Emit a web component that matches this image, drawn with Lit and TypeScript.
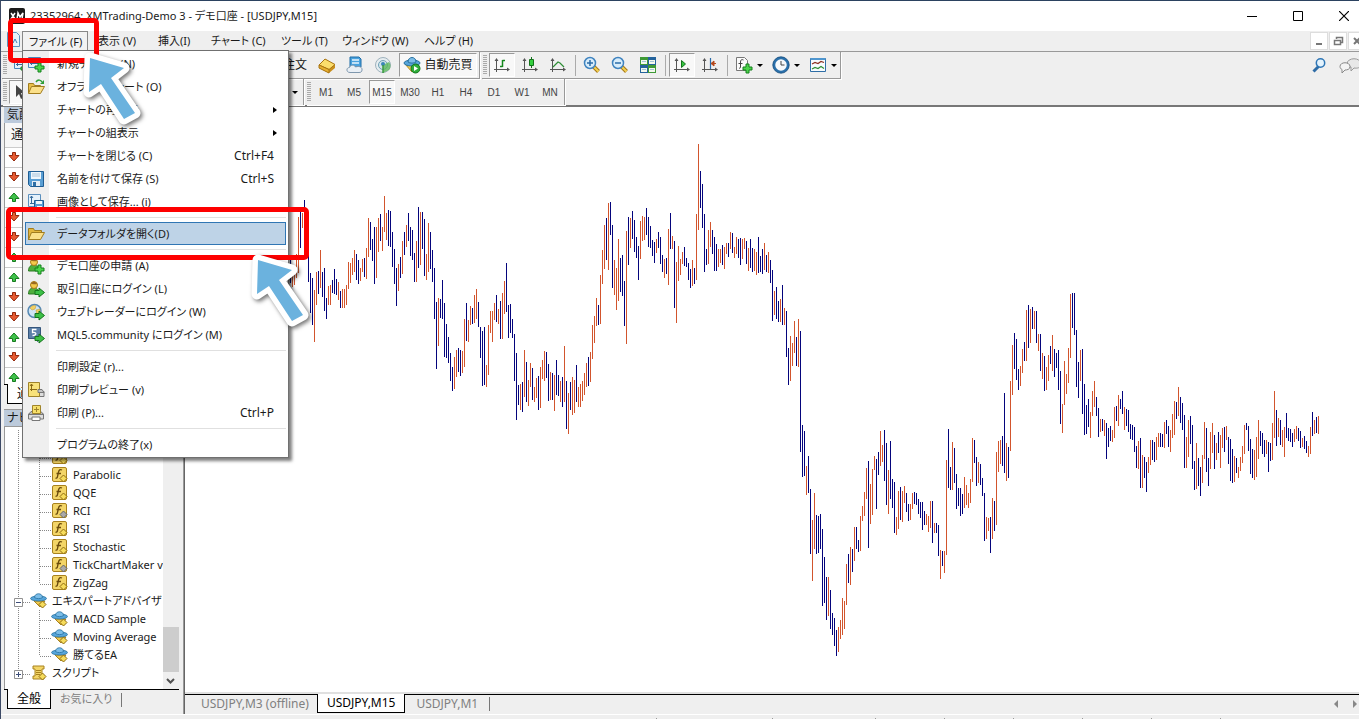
import { LitElement, html, svg, css, nothing, TemplateResult } from "lit";
import { customElement, property } from "lit/decorators.js";
import { classMap } from "lit/directives/class-map.js";

/* Price bars, two pixels apart. r = rising, b = falling, then high and low. */
const BARS = `b259-283 r275-287 r273-285 r254-278 r217-273 b212-248 r213-228 b200-245 b235-259 b255-282
b273-313 b278-325 r290-342 r272-305 b271-294 r250-288 b272-297 b268-311 b298-319 r286-305
r285-305 b280-293 b269-294 b279-295 r282-300 b291-308 r289-308 r289-308 r285-305 r262-289
r263-283 r258-275 r250-272 b254-280 b260-284 r268-281 r259-272 b258-277 r248-279 r218-257
b222-250 b239-261 b227-284 r227-278 r218-252 b214-241 r227-251 r196-232 r213-240 b210-246
b211-247 b232-267 b249-284 b268-306 r264-291 b257-278 r241-274 b232-255 r225-247 b213-241
b227-256 b230-260 b253-282 r241-282 b207-268 r212-265 b212-249 b219-276 r254-280 r223-272
b232-269 b250-282 b268-319 b302-369 r298-346 b299-318 b280-319 b303-357 b324-358 b337-363
b353-381 b367-391 r357-389 r350-377 b348-372 b350-376 r351-373 r319-367 b303-341 r320-342
r306-325 b308-324 r295-323 r289-319 b302-327 b327-358 b331-386 b327-385 r365-387 r325-375
r311-333 r311-342 r303-320 b295-322 r309-324 b301-339 r293-339 r281-314 b263-312 b305-338
b304-333 b319-338 b334-381 b353-420 b385-405 r384-410 b382-412 r350-397 b362-402 r380-406
r363-387 b368-400 r387-402 r378-398 b376-410 r367-408 r360-379 r351-381 b352-378 b364-401
r372-400 b373-400 r375-411 b360-395 b375-396 r381-402 b377-407 r346-402 b381-429 r393-434
b382-410 r377-415 r380-413 b365-402 r387-407 r384-407 r381-401 r373-395 r363-387 b357-386
r352-382 r325-359 r316-343 r298-326 b305-325 r275-324 r250-284 r225-269 b218-260 r203-270
b202-235 b225-288 r260-295 r268-310 r239-301 b258-292 b255-296 b281-326 r231-344 b217-265
r218-248 b211-239 b220-252 b237-258 b246-280 r221-259 r216-241 r217-240 b208-235 b217-247
b226-248 b240-256 b242-263 r239-253 b232-248 b237-264 b255-272 r259-278 b258-274 r229-285
b213-249 r236-249 b241-308 r262-323 r246-281 r259-275 r252-264 b247-266 b258-267 b263-280
b269-288 r260-286 b268-284 r214-280 r144-230 b171-208 b184-228 b214-272 b249-265 r230-264
r222-247 b230-254 b237-271 b244-271 r249-267 r249-263 b245-265 r247-269 r243-254 b243-257
r232-249 b233-253 r247-258 r237-254 b239-258 b238-265 r239-259 r238-249 b241-264 r248-271
b239-268 b248-272 r249-271 r252-275 b237-273 b256-272 b249-274 r243-270 b255-272 r252-273
b260-283 b270-321 r291-315 b287-319 b301-322 r299-322 b285-325 r308-325 b311-357 b348-385
r336-381 r343-366 r321-353 b337-366 r319-367 b331-452 b425-477 b431-476 r466-495 b456-493
b489-554 r520-581 r493-549 b515-554 b516-553 b514-549 b529-606 b557-603 b577-620 r577-616
b590-629 b613-635 b618-646 b630-656 r627-652 r620-639 r598-635 r601-629 r564-605 b554-583
r547-585 b549-572 r527-561 b527-549 b540-552 r516-551 r506-521 r492-516 r468-499 b461-548
r484-524 r469-515 r456-470 b459-509 b452-475 r431-466 r445-462 b430-481 b443-505 r470-514
b441-499 b479-508 b482-533 r517-535 r491-529 b487-520 r491-522 r486-503 b493-512 b504-521
r504-520 r493-509 b492-504 b493-505 b499-514 b502-518 b502-530 b511-525 r514-525 r516-532
r501-528 b501-543 r523-533 b523-533 b525-556 r550-579 b551-566 r551-573 r460-555 b429-488
b467-490 r442-490 b448-483 b474-509 b488-506 b488-516 b494-514 r477-508 r485-505 r493-508
r479-503 r438-482 b440-463 b457-486 r462-483 b464-485 b478-496 b493-541 r517-539 r518-531
b517-553 r498-539 b501-531 r452-525 r441-472 r440-464 b436-466 b393-473 r443-481 b447-478
r381-451 r345-395 b333-369 b339-380 b369-390 r366-386 r349-373 b342-361 r310-361 b305-348
r309-343 b307-329 r311-329 b311-343 r334-351 b334-371 r353-379 b356-391 r367-390 r355-381
b346-364 r335-371 b349-377 b353-368 b350-390 b371-424 r404-433 r361-405 r374-394 r348-383
r294-358 b293-328 b293-335 b330-387 b362-398 r350-381 b349-414 b384-435 b405-434 b399-427
r412-438 r391-416 r381-407 b397-416 b408-437 r419-432 b419-431 r420-436 b423-459 b428-447
b426-441 r430-442 r407-438 b406-421 r395-426 b399-409 b391-414 r407-430 b409-426 b410-432
b424-439 b425-440 b427-452 b446-468 r441-469 b438-488 r455-488 b457-478 b462-492 r457-473
r440-465 b440-460 b442-462 r437-460 r433-447 b433-447 b434-447 r422-448 b420-434 b426-447
r430-452 r414-438 r401-435 b402-419 r387-416 b397-423 b403-430 b415-468 r437-468 r420-457
b416-444 b425-469 b461-490 r443-489 b458-486 b467-496 r455-483 r422-459 b428-472 b458-486
r432-469 r423-453 b435-469 r443-460 b432-453 r435-468 r428-448 b427-452 r426-440 b437-464
b439-481 b449-483 r456-482 b458-473 r467-478 r457-471 r446-463 r425-454 b423-430 b426-451
b439-474 b449-478 r450-480 r437-477 r420-459 b431-446 b433-454 b440-457 r440-454 b442-472
b443-461 r423-460 r391-438 b410-446 r418-437 b420-445 r430-447 r427-457 b413-438 b428-441
b429-442 b433-447 r429-442 r426-439 b428-441 b431-448 r438-447 b436-449 b441-453 r446-457
r427-454 b412-436 r420-434 b417-433 r416-434`.split(/\s+/);

const FIRST_BAR_X = 105;
const BAR_STEP = 2;
const PRICE_ORIGIN = 107;

const barPath = (kind: string) =>
  BARS.map((bar, i) => {
    if (bar[0] !== kind) return "";
    const [high, low] = bar.slice(1).split("-").map(Number);
    return `M${FIRST_BAR_X + i * BAR_STEP} ${high - PRICE_ORIGIN}h1V${low - PRICE_ORIGIN}h-1z`;
  }).join("");

/* Shared parts of the icons */
const plus = svg`<path d="M11 8h3v3h3v3h-3v3h-3v-3h-3v-3h3z" fill="#4bd34b" stroke="#15801c"/>`;
const go = svg`<path d="M8 10.500h4V8l5.500 4.500L12 17v-2.500H8z" fill="#3cc046" stroke="#15741c"/>`;
const axes = svg`<path d="M3.500 3v13M1 13.500h14" fill="none" stroke="#555"/><path d="M1.500 5l2-3 2 3zM14 11.500l3 2-3 2z" fill="#555"/>`;
const person = svg`<path d="M1.500 14c0-4 2-6 5-6s6 2 6 6z" fill="#4fae3c" stroke="#2c7a24"/><circle cx="7" cy="5" r="3.500" fill="#f4c94c" stroke="#a87a18"/><path d="M4 4c1-3 5-3 6 0-2 1-4-.5-6 0z" fill="#9a6a20"/>`;
const lens = svg`<path d="M10.500 10.500l5 5" stroke="#a87818" stroke-width="4"/><path d="M10.500 10.500l5 5" stroke="#f3d152" stroke-width="2"/><circle cx="7" cy="7" r="5.500" fill="#d8edfb" stroke="#3f83bf" stroke-width="1.500"/>`;
const badge = (fill: string, stroke: string) =>
  svg`<path d="M12.500 9l3.500 3.500-3.500 3.500L9 12.500z" fill=${fill} stroke=${stroke}/>`;
const fx = svg`<rect x="1.500" y="1.500" width="14" height="14" rx="1.500" fill="#f3d567" stroke="#a8821e"/><path d="M11 4c-2-1-3 0-3.500 2l-1 4.500c-.3 1.500-1 2-2 1.500M5.500 7.500h4.500" fill="none" stroke="#6b4c0c" stroke-width="1.300"/>`;

const ICONS: Record<string, TemplateResult> = {
  newChart: svg`<path d="M1.500 2.500h12v10h-12z" fill="#e4f2fb" stroke="#4a86b8"/><path d="M4.500 4v6M3 8.500h8M4.500 4l-1.500 2M4.500 4l1.500 2" fill="none" stroke="#35699a"/>${plus}`,
  folderGo: svg`<path d="M1.500 15V5.500h5l1 2h6V9" fill="#e9bf4a" stroke="#a17c1e"/><path d="M1.500 15.500l3-7h13l-4 7z" fill="#fbe08a" stroke="#a17c1e"/><path d="M9 4c2-3 5-2 6 0" fill="none" stroke="#2f9e36" stroke-width="1.500"/><path d="M17 2v4h-4z" fill="#2f9e36"/>`,
  folder: svg`<path d="M1.500 15V3.500h5l1 2h7V8" fill="#e3b63e" stroke="#a17c1e"/><path d="M1.500 14.500l3-7h13l-4 7z" fill="#fbe08a" stroke="#a17c1e"/>`,
  save: svg`<path d="M1.500 1.500h15v15h-13l-2-2z" fill="#5a9fd4" stroke="#1f5d93"/><path d="M4 2h10v7H4z" fill="#eef6fc"/><path d="M5 4h8M5 6h8" stroke="#a9c4da"/><path d="M5 11h8v5H5z" fill="#e6eef5"/><path d="M6 12h3v4H6z" fill="#2f6fa5"/>`,
  saveImage: svg`<path d="M1.500 1.500h12v12h-12z" fill="#e6f2fb" stroke="#5b8fbd"/><path d="M4.500 3v8M3 5l1.500-2L6 5M3 10.500h6" fill="none" stroke="#35699a"/><path d="M7.500 7.500h9v9h-9z" fill="#5a9fd4" stroke="#1f5d93"/><path d="M9 8h6v3H9zM10 13h5v3h-5z" fill="#eef6fc"/>`,
  accountNew: svg`${person}${plus}`,
  accountGo: svg`${person}${go}`,
  globeGo: svg`<circle cx="7.500" cy="8" r="6.500" fill="#cfe4f4" stroke="#5689b4" stroke-width="1.500"/><path d="M3 5c2-3 5-3 6-2l-1 3-3 1zM9 7l4-1v4l-3 2z" fill="#f2cf63" stroke="#b8962e" stroke-width=".5"/>${go}`,
  mqlGo: svg`<path d="M1.500 1.500h12v10l-3 1v3l-3-3h-6z" fill="#5b7fa8" stroke="#35567c"/><path d="M9.500 3.500h-4v3c4-1 5 3 0 3" fill="none" stroke="#fff" stroke-width="1.300"/>${go}`,
  preview: svg`<path d="M10 10.500h7v5h-7z" fill="#ddd" stroke="#777"/><path d="M1.500 1.500h11v14h-11z" fill="#f8e27a" stroke="#a0842a"/><path d="M4.500 3v7M3 8.500h7M3 5l1.500-2L6 5" fill="none" stroke="#8a6a14"/><path d="M11 8.500h4l2 3h-6z" fill="#c4c4c4" stroke="#777"/>`,
  print: svg`<path d="M1.500 10h15v5h-15z" fill="#ddd" stroke="#777"/><path d="M4 7.500h10l2.500 3h-15z" fill="#bbb" stroke="#777"/><path d="M5.500 1.500h8v8h-8z" fill="#f6df6a" stroke="#a0842a"/><path d="M9.500 3v5M7 5.500h5" stroke="#a0842a"/><path d="M5 13h8v3.500H5z" fill="#fff" stroke="#777"/>`,
  order: svg`<path d="M1 9l6-6 10 6v3l-6 5L1 12z" fill="#c98f1c"/><path d="M1 9l6-6 10 5.500-6 5z" fill="#fbdd6c" stroke="#a97412"/><path d="M1 9v3l10 5v-3.500z" fill="#e7b032" stroke="#a97412"/>`,
  server: svg`<path d="M4 1h9l2 2v8H4z" fill="#4aa2de" stroke="#1f6ca6"/><path d="M6 4h7M6 7h7" stroke="#e8f5fd" stroke-width="1.500"/><path d="M4 16.500c-4 0-4-5-.5-5 1-3 5-3 6-.5 4-1.500 7 .5 6.500 3 0 2-1.500 2.500-3 2.500z" fill="#e9eff5" stroke="#7f97ad"/>`,
  signal: svg`<circle cx="9" cy="9" r="7.500" fill="#e6edf0" stroke="#9fb2bd"/><circle cx="9" cy="9" r="4.500" fill="#d2e4ea" stroke="#6fa1b5"/><path d="M9 9v8l6-3c2-2 2-6 0-8z" fill="#5cb85c" opacity=".8"/><circle cx="9" cy="8" r="2" fill="#3b86b8"/><path d="M9 9v8" stroke="#3a9a3f" stroke-width="1.500"/>`,
  auto: svg`<path d="M2 8l7 8 7-7z" fill="#f3cd54" stroke="#b08a20"/><ellipse cx="9" cy="7" rx="8" ry="3" fill="#57a5da" stroke="#27719f"/><path d="M5 6c0-6 8-6 8 0-2 1.500-6 1.500-8 0z" fill="#7cbde8" stroke="#27719f"/><circle cx="12.500" cy="12.500" r="4.500" fill="#2fae3a" stroke="#12741c"/><path d="M11 10l4 2.500-4 2.500z" fill="#fff"/>`,
  bars: svg`${axes}<path d="M9.500 4v7M7 10.500h2.500M9.500 4.500H12" fill="none" stroke="#14861c" stroke-width="1.500"/>`,
  candles: svg`${axes}<path d="M10.500 1v11" stroke="#14721c"/><path d="M8.500 3.500h4v6h-4z" fill="#35d13f" stroke="#14721c"/>`,
  line: svg`${axes}<path d="M4 11l5-5 2 1 4 4" fill="none" stroke="#2d8d35" stroke-width="1.200"/>`,
  zoomIn: svg`${lens}<path d="M4 7h6M7 4v6" stroke="#2b6ca8" stroke-width="1.500"/>`,
  zoomOut: svg`${lens}<path d="M4 7h6" stroke="#2b6ca8" stroke-width="1.500"/>`,
  tiles: svg`<path d="M1 1h8v8H1zM9 9h8v8H9z" fill="#3f9a36"/><path d="M9 1h8v8H9zM1 9h8v8H1z" fill="#24639c"/><path d="M2 4h6v4H2zM10 4h6v4h-6zM2 12h6v4H2zM10 12h6v4h-6z" fill="#f2f8ee"/><path d="M3 5.500h4M11 5.500h4M3 13.500h4M11 13.500h4" stroke="#a3c4d8"/>`,
  autoScroll: svg`${axes}<path d="M8.500 4.500l4 3.500-4 3.500z" fill="#35c43f" stroke="#14721c"/>`,
  shift: svg`${axes}<path d="M9.500 2v11" stroke="#2b6ca8" stroke-width="1.200"/><path d="M15 7.500h-4M13 5l-3 2.500 3 2.500z" fill="#b4481c" stroke="#b4481c"/>`,
  indicator: svg`<path d="M1.500 1.500h8l3 3v10h-11z" fill="#fafafa" stroke="#777"/><path d="M8.500 4c-2-1-3 0-3 2v5c0 1-.5 1.500-1.500 1M3.500 7.500h4" fill="none" stroke="#444"/>${plus}`,
  clock: svg`<circle cx="9" cy="9" r="7" fill="#f6f9fb" stroke="#2a70ab" stroke-width="2.500"/><circle cx="9" cy="9" r="8.200" fill="none" stroke="#174d7c" stroke-width=".8"/><path d="M9 5v4h3.500" fill="none" stroke="#444"/>`,
  template: svg`<path d="M1.500 2.500h15v13h-15z" fill="#f7fbfe" stroke="#2f6ea6"/><path d="M1.500 3h15" stroke="#4f96cf" stroke-width="2"/><path d="M3 8l3-1.500 3 1 3-2 3 1" fill="none" stroke="#8c3020" stroke-width="1.200"/><path d="M3 13l3-1.500 3 1 3-2 3 2" fill="none" stroke="#2d8d35" stroke-width="1.200"/>`,
  cursor: svg`<path d="M3 2v12l3-3 2 5 2-1-2-5h4z" fill="#444"/>`,
  down: svg`<path d="M4.500 4.500h3v3h3.500L6 13 1 7.500h3.500z" fill="#e85a30" stroke="#94290c"/>`,
  up: svg`<path d="M4.500 13.500h3v-3h3.500L6 5l-5 5.500h3.500z" fill="#3fc24a" stroke="#167a1e"/>`,
  search: svg`<path d="M2.500 14.500L8 9" stroke="#2e6ca6" stroke-width="3"/><circle cx="9.500" cy="6" r="4.200" fill="#e4f3fd" stroke="#2e76b6" stroke-width="1.500"/>`,
  chat: svg`<path d="M8 7c0-7 14-7 14 0 0 4-4 4.500-7 4l-3 3v-4c-2 0-4-1-4-3z" fill="#e8e8e8" stroke="#999"/><path d="M1 9.500c0-5 10-5 10 0 0 3-3 3.500-5 3.500l-3 3v-3.500c-1-.5-2-1.500-2-3z" fill="#f4f4f4" stroke="#888"/>`,
  func: svg`${fx}${badge("#f6dc5c", "#8f6d12")}`,
  funcGrey: svg`${fx}${badge("#aaa", "#666")}`,
  expert: svg`<path d="M4 9l6 6 5-6z" fill="#f0c84c" stroke="#a8821e"/><ellipse cx="8.500" cy="6.500" rx="8" ry="2.500" fill="#57a5da" stroke="#27719f" stroke-width=".8"/><path d="M4.500 5.500c0-5 8-5 8 0-2 1.500-6 1.500-8 0z" fill="#7cbde8" stroke="#27719f" stroke-width=".8"/>${badge("#f6dc5c", "#8f6d12")}`,
  script: svg`<path d="M3 2h11v3h-2v7h2v3H3v-3h2V5H3z" fill="#f3d567" stroke="#a8821e"/><path d="M6 6.500h5M6 8.500h5M6 10.500h4" stroke="#a8821e"/>${badge("#f6dc5c", "#8f6d12")}`,
};

const icon = (name: string, w = 18) =>
  html`<svg class="icon" width=${w} height="18" viewBox="0 0 ${w} 18" aria-hidden="true">${ICONS[name]}</svg>`;

const shared = css`
  * { box-sizing: border-box; }
  button, a { font: inherit; color: inherit; }
  button { border: 0; background: none; padding: 0; margin: 0; white-space: nowrap; }
  .icon { display: block; flex: none; }
`;

interface MenuEntry { label: string; icon?: string; keys?: string; sub?: boolean; active?: boolean; }

const FILE_MENU: (MenuEntry | null)[] = [
  { label: "新規チャート (N)", icon: "newChart" },
  { label: "オフラインチャート (O)", icon: "folderGo" },
  { label: "チャートの再表示", sub: true },
  { label: "チャートの組表示", sub: true },
  { label: "チャートを閉じる (C)", keys: "Ctrl+F4" },
  { label: "名前を付けて保存 (S)", icon: "save", keys: "Ctrl+S" },
  { label: "画像として保存... (i)", icon: "saveImage" },
  null,
  { label: "データフォルダを開く(D)", icon: "folder", active: true },
  null,
  { label: "デモ口座の申請 (A)", icon: "accountNew" },
  { label: "取引口座にログイン (L)", icon: "accountGo" },
  { label: "ウェブトレーダーにログイン (W)", icon: "globeGo" },
  { label: "MQL5.community にログイン (M)", icon: "mqlGo" },
  null,
  { label: "印刷設定 (r)..." },
  { label: "印刷プレビュー (v)", icon: "preview" },
  { label: "印刷 (P)...", icon: "print", keys: "Ctrl+P" },
  null,
  { label: "プログラムの終了(x)" },
];

@customElement("file-menu")
class FileMenu extends LitElement {
  static styles = [shared, css`
    :host { display: block; }
    .menu {
      width: 267px; padding: 1px 2px; border: 1px solid #707070;
      background: linear-gradient(90deg, #efefef 26px, #fff 26px);
      box-shadow: 3px 3px 3px rgba(0, 0, 0, .5);
    }
    .entry { display: flex; align-items: center; width: 261px; height: 23px; border: 1px solid transparent; padding-right: 11px; text-align: left; }
    .entry.active { background: #bed3e7; border-color: #3076b4; }
    .slot { width: 31px; padding-left: 1px; flex: none; }
    .label { flex: 1; font-size: 11px; }
    .arrow { border: 3px solid transparent; border-left: 4px solid #000; border-right: 0; margin-right: -3px; }
    .rule { height: 1px; margin: 4px 0 4px 31px; background: #e0e0e0; }
  `];
  render() {
    return html`<div class="menu" role="menu">
      ${FILE_MENU.map(e => e
        ? html`<button class=${classMap({ entry: true, active: !!e.active })} role="menuitem">
            <span class="slot">${e.icon ? icon(e.icon) : nothing}</span>
            <span class="label">${e.label}</span>
            ${e.keys ? html`<span>${e.keys}</span>` : nothing}
            ${e.sub ? html`<span class="arrow"></span>` : nothing}
          </button>`
        : html`<div class="rule" role="separator"></div>`)}
    </div>`;
  }
}

@customElement("tool-bars")
class ToolBars extends LitElement {
  static styles = [shared, css`
    :host { display: block; background: #efefef; border-bottom: 2px solid #777; }
    .row { display: flex; padding-left: 1px; align-items: stretch; }
    .strip { display: flex; align-items: center; height: 27px; border-right: 1px solid #999; border-bottom: 1px solid #999; box-shadow: 1px 1px #fff; }
    .lower { height: 26px; border-bottom: 0; }
    .first { width: 478px; }
    .second { width: 302px; }
    .end { width: 359px; margin-left: 2px; }
    .frames { margin-left: 2px; }
    .grip { width: 4px; height: 20px; margin: 0 1px; flex: none; background: repeating-linear-gradient(#aaa 0 1px, transparent 1px 2px); }
    .tool { display: flex; align-items: center; justify-content: center; width: 28px; height: 24px; flex: none; }
    .on { background: #f8f8f8; border: 1px solid; border-color: #999 #fff #fff #999; width: 26px; margin: 0 1px; }
    .drop { width: 37px; gap: 4px; }
    .caret { border: 3px solid transparent; border-top: 3px solid #000; border-bottom: 0; flex: none; }
    .auto { width: 78px; margin: 0 2px; gap: 3px; }
    .sep { width: 1px; height: 21px; margin: 0 2px 0 3px; background: #aaa; flex: none; }
    .order { flex: 1; text-align: right; padding-right: 6px; }
    .space { flex: 1; }
    .frame { font: 10px "Liberation Sans", sans-serif; color: #444; }
    .right { display: flex; align-items: center; margin-left: auto; gap: 10px; overflow: hidden; }
    .bottom { padding-right: 5px; }
  `];
  tool(name: string, label: string, on = false) {
    return html`<button class=${classMap({ tool: true, on })} aria-label=${label}>${icon(name)}</button>`;
  }
  drop(name: string, label: string) {
    return html`<button class="tool drop" aria-label=${label}>${icon(name)}<span class="caret"></span></button>`;
  }
  render() {
    return html`
      <div class="row">
        <div class="strip first">
          <span class="grip"></span>${this.tool("newChart", "新規チャート")}
          <button class="order">新規注文</button>
          ${this.tool("order", "メタエディター")}${this.tool("server", "サーバー")}${this.tool("signal", "シグナル")}
          <button class="tool on auto">${icon("auto")}<span>自動売買</span></button>
        </div>
        <div class="strip end">
          <span class="grip"></span>
          ${this.tool("bars", "バーチャート", true)}${this.tool("candles", "ローソク足")}${this.tool("line", "ラインチャート")}
          <span class="sep"></span>
          ${this.tool("zoomIn", "拡大")}${this.tool("zoomOut", "縮小")}${this.tool("tiles", "整列")}
          <span class="sep"></span>
          ${this.tool("autoScroll", "自動スクロール", true)}${this.tool("shift", "チャートシフト")}
          <span class="sep"></span>
          ${this.drop("indicator", "インディケータ")}${this.drop("clock", "時間足設定")}${this.drop("template", "定型チャート")}
        </div>
        <div class="right">
          <button aria-label="検索">${icon("search")}</button>
          <button aria-label="チャット">${icon("chat", 20)}</button>
        </div>
      </div>
      <div class="row">
        <div class="strip lower second">
          <span class="grip"></span>${this.tool("cursor", "カーソル", true)}
          <span class="space"></span>
          <button class="bottom" aria-label="その他"><span class="caret icon"></span></button>
        </div>
        <div class="strip lower frames">
          <span class="grip"></span>
          ${["M1", "M5", "M15", "M30", "H1", "H4", "D1", "W1", "MN"].map(f =>
            html`<button class=${classMap({ tool: true, frame: true, on: f === "M15" })}>${f}</button>`)}
        </div>
      </div>`;
  }
}

interface Node { label: string; icon: string; level: 1 | 2; last?: boolean; open?: boolean; }

const TREE: Node[] = [
  { label: "", icon: "func", level: 2 },
  { label: "", icon: "func", level: 2 },
  { label: "Parabolic", icon: "func", level: 2 },
  { label: "QQE", icon: "func", level: 2 },
  { label: "RCI", icon: "funcGrey", level: 2 },
  { label: "RSI", icon: "func", level: 2 },
  { label: "Stochastic", icon: "func", level: 2 },
  { label: "TickChartMaker v", icon: "funcGrey", level: 2 },
  { label: "ZigZag", icon: "func", level: 2, last: true },
  { label: "エキスパートアドバイザ", icon: "expert", level: 1, open: true },
  { label: "MACD Sample", icon: "expert", level: 2 },
  { label: "Moving Average", icon: "expert", level: 2 },
  { label: "勝てるEA", icon: "expert", level: 2, last: true },
  { label: "スクリプト", icon: "script", level: 1, last: true },
];

@customElement("side-panels")
class SidePanels extends LitElement {
  static styles = [shared, css`
    :host { display: flex; flex-direction: column; width: 183px; padding: 0 4px 5px 3px; background: #efefef; border-right: 1px solid #999; }
    .head { height: 16px; margin: 0; padding-left: 3px; line-height: 16px; font-size: 12px; font-weight: 400; background: #bccadb; flex: none; overflow: hidden; }
    .watch { height: 261px; overflow: hidden; background: #fff; flex: none; border-left: 1px solid #999; }
    .quotes { border-collapse: collapse; width: 100%; table-layout: fixed; }
    .quotes th { height: 24px; padding: 0 6px; text-align: left; font-weight: 400; border-bottom: 1px solid #ccc; background: #f7f7f7; }
    .quotes td { height: 20px; padding: 0 3px; border-bottom: 1px solid #ccc; }
    .tabs { display: flex; height: 20px; border-top: 1px solid #000; flex: none; color: #808080; }
    .tab { padding: 0 9px; margin-top: -1px; height: 20px; }
    .current { color: #000; background: #fff; border: 1px solid #000; border-top: 0; margin-left: 3px; }
    .mark { width: 1px; height: 14px; margin-top: 3px; background: #777; }
    .small { font-size: 11px; }
    .gap { height: 6px; flex: none; border-bottom: 1px solid #999; }
    .nav { flex: 1; min-height: 0; display: flex; background: #fff; border-top: 1px solid #999; border-left: 1px solid #999; overflow: hidden; }
    .tree { flex: 1; min-width: 0; display: flex; flex-direction: column; justify-content: flex-end; margin: 0; padding: 0 0 7px; list-style: none; overflow: hidden; }
    .node { display: flex; align-items: center; height: 18px; flex: none; white-space: nowrap; font-size: 11px; }
    .node .icon + .icon { margin-right: 4px; }
    .bar { width: 16px; background: #efefef; display: flex; flex-direction: column; justify-content: flex-end; align-items: center; }
    .thumb { width: 16px; height: 45px; background: #cdcdcd; }
  `];
  lines(n: Node) {
    const w = n.level === 2 ? 46 : 25;
    return html`<svg class="icon" width=${w} height="18" aria-hidden="true">
      <g stroke="#888" stroke-dasharray="1 1" fill="none">
        <path d="M13.500 0V${n.level === 1 && n.last ? 9 : 18}"/>
        ${n.level === 2
          ? svg`<path d="M34.500 0V${n.last ? 10 : 18}M35 10.500h11"/>`
          : svg`<path d="M18 10.500h7"/>`}
      </g>
      ${n.level === 1 ? svg`<path d="M9.500 6.500h8v8h-8z" fill="#fff" stroke="#919191"/>
        <path d=${n.open ? "M11 10.500h5" : "M11 10.500h5M13.500 8v5"} stroke="#3c4d78"/>` : nothing}
    </svg>`;
  }
  render() {
    const moves = ["down", "down", "up", "down", "down", "up", "up", "down", "down", "up", "down", "up"];
    return html`
      <h2 class="head">気配値</h2>
      <div class="watch">
        <table class="quotes">
          <thead><tr><th scope="col">通貨</th></tr></thead>
          <tbody>${moves.map(m => html`<tr><td>${icon(m)}</td></tr>`)}</tbody>
        </table>
      </div>
      <div class="tabs"><button class="tab current">通貨</button></div>
      <div class="gap"></div>
      <h2 class="head">ナビ</h2>
      <div class="nav">
        <ul class="tree">${TREE.map(n => html`<li class="node">${this.lines(n)}${icon(n.icon)}<span>${n.label}</span></li>`)}</ul>
        <div class="bar">
          <div class="thumb"></div>
          <svg class="icon" width="16" height="17" aria-hidden="true"><path d="M4 7l3.500 3.500L11 7" fill="none" stroke="#505050" stroke-width="2"/></svg>
        </div>
      </div>
      <div class="tabs">
        <button class="tab current">全般</button><button class="tab small">お気に入り</button><span class="mark"></span>
      </div>`;
  }
}

@customElement("price-chart")
class PriceChart extends LitElement {
  static styles = [shared, css`
    :host { display: flex; flex-direction: column; background: #fff; border-left: 1px solid #666; }
    .plot { flex: 1; min-height: 0; width: 100%; display: block; }
    .up { fill: #d2552d; }
    .down { fill: #04047c; }
    .tabs { display: flex; height: 20px; background: #efefef; border-top: 1px solid #000; box-shadow: 0 -2px #e0e0e0; color: #808080; }
    .tab { height: 19px; padding: 0 11px; margin-top: -1px; }
    .tab:first-child { padding: 0 8px 0 16px; }
    .current { color: #000; background: #fff; border: 1px solid #000; border-top: 0; padding: 0 9px; }
    .mark { width: 1px; height: 14px; margin: 2px 0 0; background: #777; }
    .arrows { margin-left: auto; display: block; }
  `];
  render() {
    return html`
      <svg class="plot" role="img" aria-label="USDJPY,M15" shape-rendering="crispEdges">
        <path class="up" d=${barPath("r")}/>
        <path class="down" d=${barPath("b")}/>
      </svg>
      <div class="tabs">
        <button class="tab">USDJPY,M3 (offline)</button>
        <button class="tab current">USDJPY,M15</button>
        <button class="tab">USDJPY,M1</button>
        <span class="mark"></span>
        <svg class="arrows" width="26" height="18" aria-hidden="true"><path d="M5 5v8L1 9zM20 5v8l4-4z" fill="#888"/></svg>
      </div>`;
  }
}

@customElement("pointer-arrow")
class PointerArrow extends LitElement {
  static styles = css`
    :host { display: block; }
    .arrow { display: block; filter: drop-shadow(2px 2px 2px rgba(0, 0, 0, .55)); }
    .shape { fill: #6bb2de; stroke: #fff; stroke-width: 11px; stroke-linejoin: round; paint-order: stroke; }
  `;
  render() {
    return html`<svg class="arrow" width="64" height="78" viewBox="-8 -7 64 78" aria-hidden="true">
      <path class="shape" d="M0 0L34 10L21 20L45 55L34 61L11 26L-1 34Z"/>
    </svg>`;
  }
}

const MENUS = ["ファイル (F)", "表示 (V)", "挿入(I)", "チャート (C)", "ツール (T)", "ウィンドウ (W)", "ヘルプ (H)"];

@customElement("app-root")
class AppRoot extends LitElement {
  @property() account = "23352964: XMTrading-Demo 3 - デモ口座 - [USDJPY,M15]";
  static styles = [shared, css`
    :host {
      display: flex; flex-direction: column; position: relative; height: 100vh; overflow: hidden;
      border-top: 1px solid #2b4260; border-left: 1px solid #3d4a66; background: #efefef; color: #1a1a1a;
      font: 12px/18px "Noto Sans", "Noto Sans CJK JP", sans-serif; font-feature-settings: "palt";
    }
    .title { display: flex; align-items: center; height: 30px; padding-left: 8px; background: #fff; flex: none; }
    .name { margin: 0 0 0 5px; font-size: 11px; font-weight: 400; flex: 1; white-space: nowrap; }
    .win { display: flex; align-items: center; justify-content: center; width: 46px; height: 30px; }
    .win:last-child { margin-right: -8px; }
    .menus { display: flex; height: 21px; border-bottom: 1px solid #999; flex: none; }
    .doc { width: 21px; padding-left: 3px; }
    .names { display: grid; grid-template-columns: 69px 60px 53px 70px 61px 82px 62px; font-size: 11px; }
    .menu { text-align: left; padding-left: 7px; height: 20px; }
    .opened { width: 66px; padding-left: 6px; border: 1px solid #888; border-bottom: 0; background: #f2f2f2; }
    .mdi { display: flex; gap: 1px; margin-left: auto; width: 49px; overflow: hidden; }
    .small { width: 18px; height: 18px; margin-top: 1px; border: 1px solid #ddd; background: #fff; flex: none; }
    .main { display: flex; flex: 1; min-height: 0; }
    .chart { flex: 1; min-width: 0; }
    .status { height: 6px; display: flex; justify-content: flex-end; align-items: flex-end; border-top: 1px solid #fff; padding-right: 138px; flex: none; }
    .cell { height: 2px; border-left: 1px solid #999; width: 69px; }
    .wide { width: 116px; }
    .mid { width: 103px; }
    .last { width: 1px; }
    .popup { position: absolute; left: 21px; top: 49px; }
    .ring { position: absolute; border: 5px solid #fe0000; border-radius: 5px; }
    .ring-menu { left: 7px; top: 17px; width: 91px; height: 45px; }
    .ring-entry { left: 5px; top: 206px; width: 303px; height: 53px; }
    .point-menu { position: absolute; left: 81px; top: 50px; }
    .point-entry { position: absolute; left: 249px; top: 252px; }
  `];
  render() {
    return html`
      <header class="title">
        <svg class="icon" width="16" height="16" viewBox="0 0 16 16" aria-hidden="true">
          <rect width="16" height="16" rx="2" fill="#1b1b1b"/>
          <path d="M2 5l4 6M6 5l-4 6M8 11l1-6 2 4 3-4-1 6" fill="none" stroke="#fff" stroke-width="1.500"/>
          <path d="M3 13h10" stroke="#c22"/>
        </svg>
        <h1 class="name">${this.account}</h1>
        <button class="win" aria-label="最小化"><svg width="10" height="10"><path d="M0 5.500h10" stroke="#000"/></svg></button>
        <button class="win" aria-label="最大化"><svg width="10" height="10"><path d="M.5.500h9v9h-9z" fill="none" stroke="#000"/></svg></button>
        <button class="win" aria-label="閉じる"><svg width="10" height="10"><path d="M0 0l10 10M10 0L0 10" stroke="#000" stroke-width="1.200"/></svg></button>
      </header>
      <nav class="menus">
        <span class="doc">
          <svg class="icon" width="18" height="18" aria-hidden="true"><path d="M3.500 1.500h9l3 3v11h-12z" fill="#e6f2fb" stroke="#5a94c0"/><path d="M5 12l2-4 2 4 2-4 2 4" fill="none" stroke="#3f7fb4"/></svg>
        </span>
        <div class="names">${MENUS.map((m, i) => html`<button class=${classMap({ menu: true, opened: i === 0 })}>${m}</button>`)}</div>
        <div class="mdi">
          <button class="small" aria-label="最小化"><svg class="icon" width="16" height="16"><path d="M5 11h6" stroke="#777" stroke-width="2"/></svg></button>
          <button class="small" aria-label="元に戻す"><svg class="icon" width="16" height="16"><path d="M6.500 6V4.500h6v5H11M4.500 7.500h6v4h-6zM6 4.500h6.500M4 7.500h7" fill="none" stroke="#777" stroke-width="1.500"/></svg></button>
          <button class="small" aria-label="閉じる"><svg class="icon" width="16" height="16"><path d="M5 5l6 6M11 5l-6 6" stroke="#777" stroke-width="2"/></svg></button>
        </div>
      </nav>
      <tool-bars></tool-bars>
      <div class="main">
        <side-panels></side-panels>
        <price-chart class="chart"></price-chart>
      </div>
      <footer class="status">
        <span class="cell wide"></span><span class="cell mid"></span><span class="cell"></span><span class="cell"></span><span class="cell"></span><span class="cell"></span><span class="cell"></span><span class="cell last"></span>
      </footer>
      <file-menu class="popup"></file-menu>
      <div class="ring ring-menu"></div>
      <div class="ring ring-entry"></div>
      <pointer-arrow class="point-menu"></pointer-arrow>
      <pointer-arrow class="point-entry"></pointer-arrow>`;
  }
}
